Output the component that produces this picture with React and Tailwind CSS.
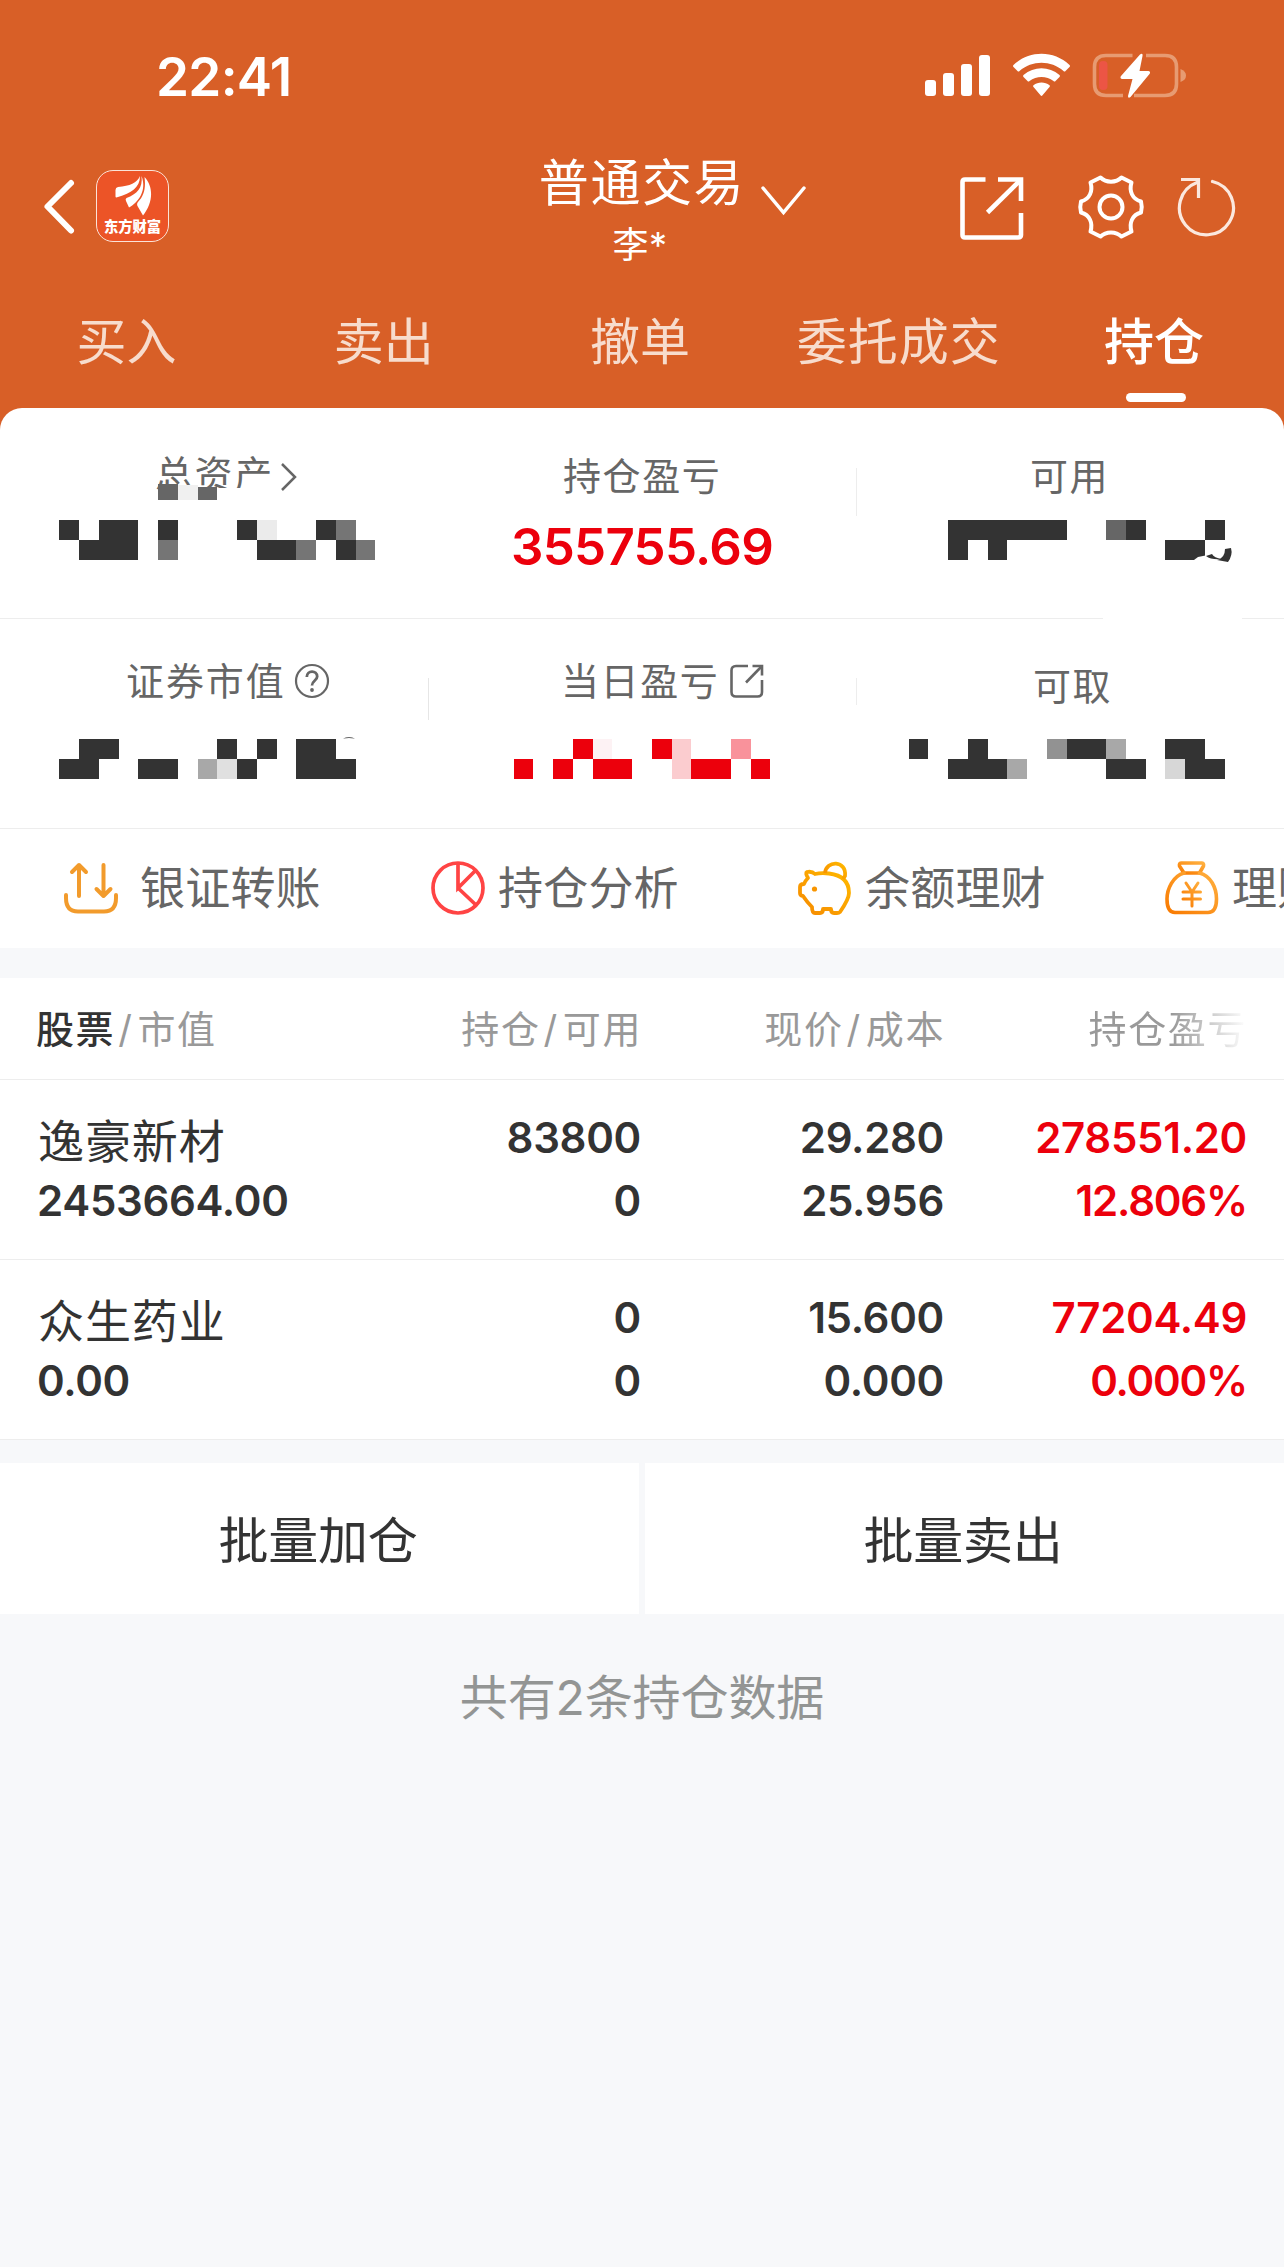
import React from 'react';

const DARK = '#333333';
const RED = '#ec000c';

// each block is [x, y, width, color], one block is 20px high
const totalBlocks = [
  [0, 0, 20, DARK], [40, 0, 39, DARK], [99, 0, 20, DARK], [178, 0, 20, DARK], [198, 0, 20, '#ebebeb'],
  [257, 0, 20, DARK], [277, 0, 20, '#757575'],
  [20, 20, 59, DARK], [99, 20, 20, '#757575'], [198, 20, 39, DARK], [237, 20, 20, '#757575'],
  [277, 20, 20, DARK], [297, 20, 19, '#757575'],
];
const marketBlocks = [
  [20, 0, 40, DARK], [158, 0, 20, DARK], [198, 0, 20, DARK], [237, 0, 40, DARK],
  [0, 20, 40, DARK], [79, 20, 40, DARK], [139, 20, 19, '#a8a8a8'], [158, 20, 20, '#e0e0e0'],
  [178, 20, 20, DARK], [237, 20, 60, DARK],
];
const todayBlocks = [
  [59, 0, 20, RED], [79, 0, 19, '#fdf2f4'], [138, 0, 20, RED], [158, 0, 19, '#fbcccf'], [217, 0, 20, '#f9929b'],
  [0, 20, 19, RED], [39, 20, 20, RED], [79, 20, 39, RED], [158, 20, 19, '#fbcccf'], [177, 20, 40, RED],
  [237, 20, 19, RED],
];
const usableBlocks = [
  [0, 0, 119, DARK], [158, 0, 20, '#666666'], [178, 0, 20, DARK], [257, 0, 20, DARK],
  [0, 20, 20, DARK], [40, 20, 19, DARK], [217, 20, 40, DARK],
];
const cashBlocks = [
  [0, 0, 19, DARK], [59, 0, 20, DARK], [138, 0, 20, '#929292'], [158, 0, 39, DARK], [197, 0, 20, '#a8a8a8'],
  [256, 0, 40, DARK],
  [39, 20, 59, DARK], [98, 20, 20, '#a8a8a8'], [197, 20, 40, DARK], [256, 20, 20, '#d7d7d7'], [276, 20, 40, DARK],
];

const stocks = [
  { name: '逸豪新材', value: '2453664.00', hold: '83800', usable: '0', price: '29.280', cost: '25.956', profit: '278551.20', rate: '12.806%' },
  { name: '众生药业', value: '0.00', hold: '0', usable: '0', price: '15.600', cost: '0.000', profit: '77204.49', rate: '0.000%' },
];

const Mosaic = ({ blocks, className, children }) => (
  <svg width="330" height="44" viewBox="0 0 330 44" className={`overflow-visible ${className}`}>
    <g shapeRendering="crispEdges">
      {blocks.map(([x, y, w, fill]) => (
        <rect key={`${x}-${y}`} x={x} y={y} width={w} height="20" fill={fill} />
      ))}
    </g>
    {children}
  </svg>
);

const StatusBar = () => (
  <div className="flex h-[140px] items-start justify-between pl-[156px] pr-[95px]">
    <span className="mt-[51px] text-[53px] font-semibold leading-[52px] tracking-[-0.7px]">22:41</span>
    <div className="mt-[53px] flex items-start">
      <svg width="66" height="44" viewBox="0 0 66 44" fill="#fff">
        <rect x="0" y="27" width="11" height="16" rx="3" />
        <rect x="18" y="20" width="11" height="23" rx="3" />
        <rect x="36" y="11" width="11" height="32" rx="3" />
        <rect x="54" y="2" width="11" height="41" rx="3" />
      </svg>
      <svg width="58" height="44" viewBox="0 0 58 44" fill="#fff" className="ml-[22px]">
        <path d="M0.5 14Q-0.5 13 0.5 12C16 -3 41 -3 56.500 12Q57.500 13 56.500 14L52.500 18Q51.500 19 50.500 18C38 7 19 7 6.500 18Q5.500 19 4.500 18Z" />
        <path d="M10.500 24Q9.500 23 10.500 22C21 13 36 13 46.500 22Q47.500 23 46.500 24L42.500 28Q41.500 29 40.500 28C33.500 22.500 23.500 22.500 16.500 28Q15.500 29 14.500 28Z" />
        <path d="M20.500 34Q19.500 33 20.500 32.300C25 28.500 32 28.500 36.500 32.300Q37.500 33 36.500 34L29.500 42.300Q28.500 43.500 27.500 42.300Z" />
      </svg>
      <svg width="96" height="46" viewBox="0 0 96 46" className="ml-[21px] mr-px">
        <g fill="none" stroke="#e79b72" strokeWidth="3.600">
          <path d="M40.500 2.500H14Q2.500 2.500 2.500 14V31Q2.500 42.500 14 42.500H31" />
          <path d="M54 2.500H73Q84.500 2.500 84.500 14V31Q84.500 42.500 73 42.500H42" />
        </g>
        <path d="M88.500 16Q94 18 94 22.500T88.500 29Z" fill="#e79b72" />
        <rect x="7" y="8" width="8.500" height="29" rx="4" fill="#ec5545" />
        <path d="M48 1.500Q51 -0.500 50.500 3L47.500 18H56.500Q59 18.500 57.500 21L38.500 44Q36 46 36 43L40.500 26H30Q27.500 25.500 29 23Z" fill="#fff" />
      </svg>
    </div>
  </div>
);

const NavBar = () => (
  <div className="grid h-[160px] grid-cols-[540px_204px_1fr]">
    <div className="flex items-start pl-[42px] pt-[30px]">
      <svg width="34" height="74" viewBox="0 0 34 74" fill="none" stroke="#fff" strokeWidth="6" strokeLinecap="round" strokeLinejoin="round">
        <path d="M29 13L5.500 36.500L29 60.500" />
      </svg>
      <div className="ml-5 flex h-[72px] w-[73px] flex-col items-center rounded-[17px] border-[1.5px] border-[#fbe3d8] bg-[#ec5427]">
        <svg width="40" height="42" viewBox="0 0 40 42" fill="#fff" className="mt-[5px]">
          <path d="M27 0C24 7 17 10 5 11Q2.500 11.500 2.500 14V20.500Q2.500 22 5 21C18 17 27 12 27 0Z" />
          <path d="M28.500 0C30 12 24 18 13.500 22Q12 23 13 25L16 31.500C26 26 34 14 28.500 0Z" />
          <path d="M31.500 1C33 12 31 20 25 26Q23.500 27.500 24.500 30L30 39.500C40 27 41 11 31.500 1Z" />
        </svg>
        <span className="-mt-[2px] whitespace-nowrap text-[14.3px] font-black leading-[22px]">东方财富</span>
      </div>
    </div>
    <div className="relative flex flex-col items-center whitespace-nowrap">
      <h1 className="mt-[17px] text-[50px] leading-[52px] tracking-[1.6px]">普通交易</h1>
      <p className="mt-[15px] pr-1 text-[36px] leading-[42px] tracking-[0.5px]">李*</p>
      <svg width="50" height="32" viewBox="0 0 50 32" fill="none" stroke="#fff" strokeWidth="3.500" strokeLinecap="round" className="absolute left-[219px] top-[44px]">
        <path d="M4 4L24.500 28.500L45 4" />
      </svg>
    </div>
    <div className="flex items-start pl-[214px] pt-[33px]">
      <svg width="68" height="68" viewBox="0 0 68 68" fill="none" stroke="#fff" strokeWidth="4.600">
        <path d="M27.500 6.500H7Q4.500 6.500 4.500 9V62Q4.500 64.500 7 64.500H60Q63 64.500 63 62V40" />
        <path d="M40 6.500H63V28" />
        <path d="M62 7.500L29.500 39.500" />
      </svg>
      <svg width="70" height="68" viewBox="-35 -34 70 68" fill="none" stroke="#fff" strokeWidth="4" strokeLinejoin="round" className="ml-[50px]">
        <path d="M-10.500 -29.500C-5 -24 5 -24 10.500 -29.500L20.500 -24.500C18 -16 21 -8 30 -5.500Q31.500 0 30 5.500C21 8 18 16 20.500 24.500L10.500 29.500C5 24 -5 24 -10.500 29.500L-20.500 24.500C-18 16 -21 8 -30 5.500Q-31.500 0 -30 -5.500C-21 -8 -18 -16 -20.500 -24.500Z" />
        <circle r="11.500" />
      </svg>
      <svg width="62" height="66" viewBox="0 0 62 66" fill="none" stroke="#fbe8de" strokeWidth="3.200" className="ml-[29px]">
        <path d="M37.500 8.500A27 27 0 1 1 22 9.500" strokeLinecap="round" />
        <path d="M6 6.500H23.500V25" />
      </svg>
    </div>
  </div>
);

const Tabs = () => (
  <nav className="grid h-[108px] grid-cols-5 text-center text-[50px] leading-[56px] text-[#f7dccd]">
    <span className="mt-[14px] pr-1">买入</span>
    <span className="mt-[14px] pr-[3px]">卖出</span>
    <span className="mt-[14px] pr-1">撤单</span>
    <span className="mt-[14px] whitespace-nowrap tracking-[1px]">委托成交</span>
    <span className="mt-[14px] flex flex-col items-center font-medium text-white">
      <span className="pr-[3px]">持仓</span>
      <i className="mt-[23px] h-[9px] w-[60px] rounded-full bg-white" />
    </span>
  </nav>
);

const Summary = () => (
  <section className="text-[38px] leading-10 tracking-[1.6px] text-[#666666]">
    <div className="grid h-[211px] grid-cols-[428px_428px_428px] border-b border-[#ededed]">
      <div className="relative pt-[46px]">
        <div className="flex items-center pl-[155px]">
          总资产
          <svg width="18" height="30" viewBox="0 0 18 30" fill="none" stroke="#666" strokeWidth="2.500" className="ml-[6px] mt-[5px]">
            <path d="M2 2L15 15L2 28" />
          </svg>
        </div>
        <svg width="120" height="18" viewBox="0 0 120 18" shapeRendering="crispEdges" className="absolute left-[158px] top-[76px]">
          <path d="M0 4H120V18H0Z" fill="#fff" />
          <path d="M0 0H20V16H0Z" fill="#666" />
          <path d="M20 1H40V16H20Z" fill="#f0f0f0" />
          <path d="M40 3H59V16H40Z" fill="#666" />
        </svg>
        <Mosaic blocks={totalBlocks} className="ml-[59px] mt-[26px]" />
      </div>
      <div className="relative pt-12">
        <div className="pl-[135px]">持仓盈亏</div>
        <div className="mt-[25px] text-center text-[51px] font-semibold leading-[51px] tracking-[-0.7px] text-[#ec000c]">355755.69</div>
        <i className="absolute -right-px top-[60px] h-12 w-px bg-[#ededed]" />
      </div>
      <div className="relative pt-12">
        <div className="pl-[174px]">可用</div>
        <Mosaic blocks={usableBlocks} className="ml-[92px] mt-6">
          <path d="M250 37L260 35L263 40H246Z" fill="#fff" />
          <path d="M258 36L264 34Q266 38 274 39Q263 40 258 36Z" fill={DARK} />
          <path d="M277 29L283 28Q285 35 280 42L269 40Q277 38 277 29Z" fill={DARK} />
        </Mosaic>
        <i className="absolute -bottom-px left-[247px] h-px w-[139px] bg-white" />
      </div>
    </div>
    <div className="grid h-[210px] grid-cols-[428px_428px_428px] border-b border-[#ededed]">
      <div className="relative pt-[42px]">
        <div className="flex items-center pl-[126px] tracking-[1.9px]">
          证券市值
          <svg width="36" height="36" viewBox="0 0 36 36" fill="none" stroke="#666" strokeWidth="2.200" className="ml-[8px]">
            <circle cx="18" cy="18" r="16" />
            <path d="M12.800 14C12.800 6.800 23.200 6.800 23.200 13.500C23.200 17.500 18 17.500 18 22.500" strokeWidth="2.800" />
            <circle cx="18" cy="27" r="1.900" fill="#666" stroke="none" />
          </svg>
        </div>
        <Mosaic blocks={marketBlocks} className="ml-[59px] mt-[38px]">
          <path d="M284 -0.500Q290 -3 296 -0.500Q290 -1.500 284 -0.500Z" fill={DARK} />
        </Mosaic>
        <i className="absolute -right-px top-[59px] h-[42px] w-px bg-[#e6e6e6]" />
      </div>
      <div className="relative pt-[42px]">
        <div className="flex items-center pl-[133px]">
          当日盈亏
          <svg width="36" height="36" viewBox="0 0 36 36" fill="none" stroke="#666" strokeWidth="2.600" className="ml-[10px]">
            <path d="M19 3H7Q2.500 3 2.500 7.500V29Q2.500 33.500 7 33.500H28.500Q33 33.500 33 29V17" />
            <path d="M23.500 3H33V12.500" />
            <path d="M33 3L17 19.500" />
          </svg>
        </div>
        <Mosaic blocks={todayBlocks} className="ml-[86px] mt-[38px]" />
        <i className="absolute -right-px top-[59px] h-[27px] w-px bg-[#ededed]" />
      </div>
      <div className="pt-[47px]">
        <div className="pl-[177px]">可取</div>
        <Mosaic blocks={cashBlocks} className="ml-[53px] mt-[33px]" />
      </div>
    </div>
  </section>
);

const QuickActions = () => (
  <section className="flex h-[119px] items-center overflow-hidden pl-16 text-[45px] leading-[54px] tracking-[0.2px] text-[#666666]">
    <div className="flex w-[367px] shrink-0 items-center">
      <svg width="54" height="54" viewBox="0 0 54 54" fill="none" stroke="#f29b2c" strokeWidth="4" strokeLinecap="round" strokeLinejoin="round" className="-mt-0.5">
        <path d="M15 35V4M8 11L15 4L22 11" />
        <path d="M39.500 4V35M32.500 28L39.500 35L46.500 28" />
        <path d="M2 34V37Q2 50.500 14 50.500H40Q52 50.500 52 37V34" />
      </svg>
      <span className="ml-[22px]">银证转账</span>
    </div>
    <div className="flex w-[367px] shrink-0 items-center">
      <svg width="54" height="54" viewBox="0 0 54 54" fill="none" stroke="#ff4444" strokeWidth="3.700" className="-mt-0.5">
        <circle cx="27" cy="27" r="25" />
        <path d="M27 2V27L44.500 9.500M27 27L45 44" />
      </svg>
      <span className="ml-[13px]">持仓分析</span>
    </div>
    <div className="flex w-[367px] shrink-0 items-center">
      <svg width="54" height="54" viewBox="0 0 54 54" fill="none" stroke="url(#pig)" strokeWidth="3.800" strokeLinejoin="round" className="-mt-0.5">
        <defs>
          <linearGradient id="pig" x1="0" y1="1" x2="1" y2="0">
            <stop offset="0" stopColor="#f68a00" />
            <stop offset="1" stopColor="#ffb900" />
          </linearGradient>
        </defs>
        <path d="M9 11Q14 10 17 13Q23 11.500 31 12.500Q51 15 51 32Q51 38 42 51Q41 52 39 52H36Q33 52 33 48H25Q25 52 22 52H17Q14 52 14 46Q9 41 5 35Q2 35 2 32V26Q2 23 6 23Q7 20 10 17Q7 12 9 11Z" />
        <path d="M27 12C28 -1 49 -1 47 15L45 18" />
        <circle cx="16.500" cy="28" r="2.600" fill="#f89500" stroke="none" />
      </svg>
      <span className="ml-[13px]">余额理财</span>
    </div>
    <div className="flex w-[367px] shrink-0 items-center">
      <svg width="54" height="54" viewBox="0 0 54 54" fill="none" stroke="url(#bag)" strokeWidth="3.600" strokeLinejoin="round" strokeLinecap="round" className="-mt-0.5">
        <defs>
          <linearGradient id="bag" x1="0" y1="1" x2="1" y2="0">
            <stop offset="0" stopColor="#f97a00" />
            <stop offset="1" stopColor="#ffb03f" />
          </linearGradient>
        </defs>
        <path d="M16 2H37Q39 2 38.500 5L34.500 12H19L14.500 5Q14 2 16 2Z" />
        <path d="M19 12C8 15 2 28 2 38Q2 51.500 10 51.500H43Q51.500 51.500 51.500 38C51.500 27 46 15 34.500 12" />
        <path d="M21 22L27 31L33 22M18 31H35.500M18 38H35.500M27 31V45" strokeWidth="3" />
      </svg>
      <span className="ml-[13px] whitespace-nowrap">理财</span>
    </div>
  </section>
);

const Slash = () => <span className="pl-[3px] pr-1">/</span>;

const Holdings = () => (
  <section className="bg-white">
    <div className="grid h-[102px] grid-cols-[36px_300px_306px_303px_302px] items-center border-b border-[#ededed] text-right text-[38px] leading-[46px] tracking-[1.6px] text-[#999999]">
      <span />
      <span className="text-left"><b className="font-medium text-[#333333]">股票</b><Slash />市值</span>
      <span>持仓<Slash />可用</span>
      <span>现价<Slash />成本</span>
      <span className="bg-gradient-to-r from-[#999999] from-75% to-white bg-clip-text text-transparent">持仓盈亏</span>
    </div>
    {stocks.map((stock) => (
      <div key={stock.name} className="grid h-[180px] grid-cols-[38px_300px_303px_303px_303px] border-b border-[#ededed] pt-[26px] text-right text-[42px] font-[560] leading-[63px] tracking-[-0.3px] text-[#333333]">
        <span />
        <div className="text-left">
          <p className="relative top-[4px] text-[46px] font-normal tracking-[0.9px]">{stock.name}</p>
          <p className="-ml-px">{stock.value}</p>
        </div>
        <div>
          <p>{stock.hold}</p>
          <p>{stock.usable}</p>
        </div>
        <div>
          <p>{stock.price}</p>
          <p>{stock.cost}</p>
        </div>
        <div className="text-[#ec000c]">
          <p>{stock.profit}</p>
          <p className="tracking-[-1.2px]">{stock.rate}</p>
        </div>
      </div>
    ))}
  </section>
);

const App = () => {
  return (
    <div lang="zh-CN" className="min-h-[2267px] w-[1284px] overflow-hidden bg-[#f7f8fa] [font-family:Inter,'Noto_Sans_CJK_SC',sans-serif]">
      <div className="bg-[#d85f27]">
        <header className="text-white">
          <StatusBar />
          <NavBar />
          <Tabs />
        </header>
        <div className="rounded-t-[22px] bg-white">
          <Summary />
          <QuickActions />
        </div>
      </div>
      <div className="mt-[30px]">
        <Holdings />
      </div>
      <div className="mt-[23px] flex h-[151px] gap-1.5 text-[50px] tracking-[-0.2px] text-[#333333]">
        <button className="w-[639px] bg-white pr-[3px] pt-[5px]">批量加仓</button>
        <button className="w-[639px] bg-white pr-[3px] pt-[5px]">批量卖出</button>
      </div>
      <p className="mt-[56px] text-center text-[48px] leading-[56px] tracking-[-0.1px] text-[#939594]">共有2条持仓数据</p>
    </div>
  );
};

export default App;
